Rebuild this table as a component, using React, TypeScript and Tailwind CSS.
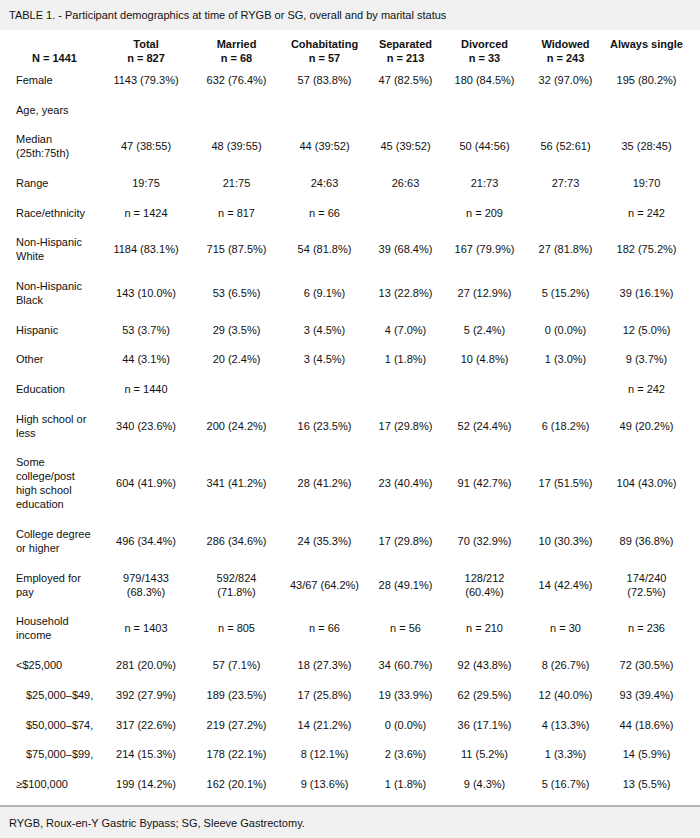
type Row = {
  label: string;
  cells: string[];
  indent?: boolean;
};

const header: { title: string; n: string }[] = [
  { title: "Total", n: "n = 827" },
  { title: "Married", n: "n = 68" },
  { title: "Cohabitating", n: "n = 57" },
  { title: "Separated", n: "n = 213" },
  { title: "Divorced", n: "n = 33" },
  { title: "Widowed", n: "n = 243" },
  { title: "Always single", n: "" },
];

// income labels are cut off in the source table, kept as shown
const rows: Row[] = [
  { label: "Female", cells: ["1143 (79.3%)", "632 (76.4%)", "57 (83.8%)", "47 (82.5%)", "180 (84.5%)", "32 (97.0%)", "195 (80.2%)"] },
  { label: "Age, years", cells: ["", "", "", "", "", "", ""] },
  { label: "Median (25th:75th)", cells: ["47 (38:55)", "48 (39:55)", "44 (39:52)", "45 (39:52)", "50 (44:56)", "56 (52:61)", "35 (28:45)"] },
  { label: "Range", cells: ["19:75", "21:75", "24:63", "26:63", "21:73", "27:73", "19:70"] },
  { label: "Race/ethnicity", cells: ["n = 1424", "n = 817", "n = 66", "", "n = 209", "", "n = 242"] },
  { label: "Non-Hispanic White", cells: ["1184 (83.1%)", "715 (87.5%)", "54 (81.8%)", "39 (68.4%)", "167 (79.9%)", "27 (81.8%)", "182 (75.2%)"] },
  { label: "Non-Hispanic Black", cells: ["143 (10.0%)", "53 (6.5%)", "6 (9.1%)", "13 (22.8%)", "27 (12.9%)", "5 (15.2%)", "39 (16.1%)"] },
  { label: "Hispanic", cells: ["53 (3.7%)", "29 (3.5%)", "3 (4.5%)", "4 (7.0%)", "5 (2.4%)", "0 (0.0%)", "12 (5.0%)"] },
  { label: "Other", cells: ["44 (3.1%)", "20 (2.4%)", "3 (4.5%)", "1 (1.8%)", "10 (4.8%)", "1 (3.0%)", "9 (3.7%)"] },
  { label: "Education", cells: ["n = 1440", "", "", "", "", "", "n = 242"] },
  { label: "High school or less", cells: ["340 (23.6%)", "200 (24.2%)", "16 (23.5%)", "17 (29.8%)", "52 (24.4%)", "6 (18.2%)", "49 (20.2%)"] },
  { label: "Some college/post high school education", cells: ["604 (41.9%)", "341 (41.2%)", "28 (41.2%)", "23 (40.4%)", "91 (42.7%)", "17 (51.5%)", "104 (43.0%)"] },
  { label: "College degree or higher", cells: ["496 (34.4%)", "286 (34.6%)", "24 (35.3%)", "17 (29.8%)", "70 (32.9%)", "10 (30.3%)", "89 (36.8%)"] },
  { label: "Employed for pay", cells: ["979/1433 (68.3%)", "592/824 (71.8%)", "43/67 (64.2%)", "28 (49.1%)", "128/212 (60.4%)", "14 (42.4%)", "174/240 (72.5%)"] },
  { label: "Household income", cells: ["n = 1403", "n = 805", "n = 66", "n = 56", "n = 210", "n = 30", "n = 236"] },
  { label: "<$25,000", cells: ["281 (20.0%)", "57 (7.1%)", "18 (27.3%)", "34 (60.7%)", "92 (43.8%)", "8 (26.7%)", "72 (30.5%)"] },
  { label: "$25,000–$49,", indent: true, cells: ["392 (27.9%)", "189 (23.5%)", "17 (25.8%)", "19 (33.9%)", "62 (29.5%)", "12 (40.0%)", "93 (39.4%)"] },
  { label: "$50,000–$74,", indent: true, cells: ["317 (22.6%)", "219 (27.2%)", "14 (21.2%)", "0 (0.0%)", "36 (17.1%)", "4 (13.3%)", "44 (18.6%)"] },
  { label: "$75,000–$99,", indent: true, cells: ["214 (15.3%)", "178 (22.1%)", "8 (12.1%)", "2 (3.6%)", "11 (5.2%)", "1 (3.3%)", "14 (5.9%)"] },
  { label: "≥$100,000", cells: ["199 (14.2%)", "162 (20.1%)", "9 (13.6%)", "1 (1.8%)", "9 (4.3%)", "5 (16.7%)", "13 (5.5%)"] },
];

export default function App() {
  return (
    <div className="w-[700px] h-[838px] bg-white text-[#111] text-[11px] leading-[14px] font-['Liberation_Sans',Arial,sans-serif] flex flex-col">
      <div className="h-[30px] bg-[#f1f1f1] flex items-center px-[9px] shrink-0">
        TABLE 1. - Participant demographics at time of RYGB or SG, overall and by marital status
      </div>

      <table className="table-fixed border-collapse ml-[8px] mt-[7px] w-[679px]">
        <colgroup>
          <col className="w-[93px]" />
          <col className="w-[90px]" />
          <col className="w-[91px]" />
          <col className="w-[85px]" />
          <col className="w-[77px]" />
          <col className="w-[81px]" />
          <col className="w-[81px]" />
          <col className="w-[81px]" />
        </colgroup>
        <thead>
          <tr>
            <th className="p-0 font-bold text-center align-top">
              <div>&nbsp;</div>
              <div>N = 1441</div>
            </th>
            {header.map((h) => (
              <th key={h.title} className="p-0 px-0.5 font-bold text-center align-top">
                <div className="whitespace-nowrap">{h.title}</div>
                <div>{h.n || "\u00a0"}</div>
              </th>
            ))}
          </tr>
        </thead>
        <tbody>
          {rows.map((r) => (
            <tr key={r.label}>
              <td className={`py-[7.85px] pr-2 align-middle ${r.indent ? "pl-[18px] whitespace-nowrap" : "pl-2"}`}>
                {r.label}
              </td>
              {r.cells.map((c, i) => (
                <td key={i} className="py-[7.85px] px-1.5 text-center align-middle">
                  {c}
                </td>
              ))}
            </tr>
          ))}
        </tbody>
      </table>

      <div className="mt-auto border-t-2 border-[#b2b2b2] bg-[#f1f1f1] h-[33px] flex items-center px-[9px] shrink-0">
        RYGB, Roux-en-Y Gastric Bypass; SG, Sleeve Gastrectomy.
      </div>
    </div>
  );
}
